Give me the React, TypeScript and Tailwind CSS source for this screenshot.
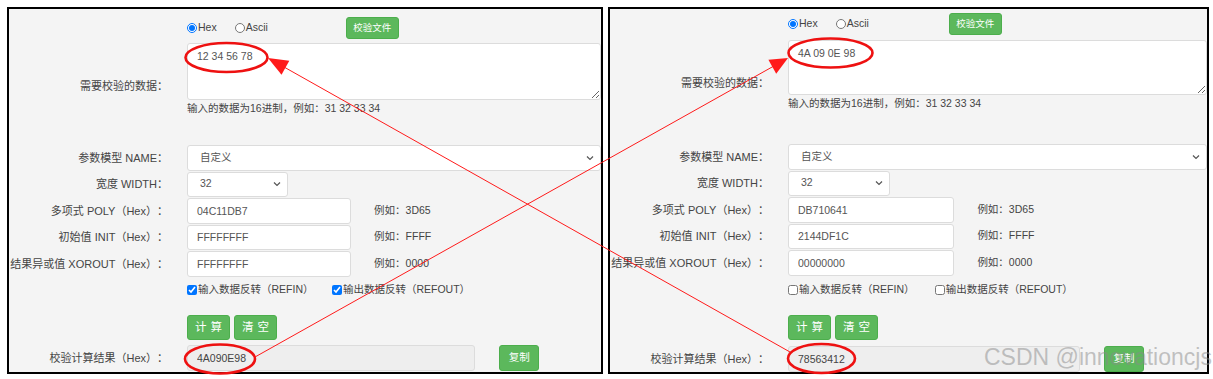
import clsx from "clsx";

type PanelData = {
  name: string;
  input: string;
  poly: string;
  init: string;
  xorout: string;
  refin: boolean;
  refout: boolean;
  result: string;
};

const left: PanelData = {
  name: "a",
  input: "12 34 56 78",
  poly: "04C11DB7",
  init: "FFFFFFFF",
  xorout: "FFFFFFFF",
  refin: true,
  refout: true,
  result: "4A090E98",
};

const right: PanelData = {
  name: "b",
  input: "4A 09 0E 98",
  poly: "DB710641",
  init: "2144DF1C",
  xorout: "00000000",
  refin: false,
  refout: false,
  result: "78563412",
};

function Chevron() {
  return (
    <svg width="8" height="5" viewBox="0 0 8 5" className="absolute right-[7px] top-1/2 -translate-y-1/2">
      <path d="M1 1 L4 4 L7 1" fill="none" stroke="#555" strokeWidth="1.2" />
    </svg>
  );
}

function Row({ label, children }: { label: string; children: React.ReactNode }) {
  return (
    <div className="flex items-center h-[25.5px]">
      <div className="w-[159px] shrink-0 text-right whitespace-nowrap text-[11px]">{label}</div>
      <div className="ml-[19px] flex-1 flex items-center h-full">{children}</div>
    </div>
  );
}

const inputCls =
  "h-full bg-white border border-[#dcdcdc] rounded-[3px] px-[9px] text-[10.5px] text-[#555] outline-none";

function Panel({ d, wide }: { d: PanelData; wide?: boolean }) {
  return (
    <div
      className={clsx(
        "border-2 border-black bg-[#f4f4f4] h-[367px] flex flex-col text-[10.5px] text-[#444]",
        wide ? "w-[601px] pt-[4px]" : "w-[596px] pt-[8px]"
      )}
    >
      <div className="flex items-center h-[22px] pl-[178px]">
        <label className="flex items-center">
          <input type="radio" name={d.name} defaultChecked className="w-[10px] h-[10px] m-0" />
          <span className="ml-[1px]">Hex</span>
        </label>
        <label className="flex items-center ml-[18px]">
          <input type="radio" name={d.name} className="w-[10px] h-[10px] m-0" />
          <span className="ml-[1px]">Ascii</span>
        </label>
        <button
          className={clsx(
            "h-[22px] w-[53px] bg-[#5cb85c] border border-[#4cae4c] rounded-[3px] text-white text-[9.5px]",
            wide ? "ml-[80px]" : "ml-[78px]"
          )}
        >
          校验文件
        </button>
      </div>

      <div className={clsx("flex items-start", wide ? "mt-[5px]" : "mt-[4px]")}>
        <div className="w-[159px] shrink-0 text-right pt-[36px] leading-[14px] text-[11px]">需要校验的数据：</div>
        <div className="ml-[19px] flex-1 flex flex-col">
          <textarea
            defaultValue={d.input}
            className={clsx(
              "w-full bg-white border border-[#dcdcdc] rounded-[3px] px-[9px] pt-[5px] text-[10.5px] text-[#555] outline-none leading-[14px]",
              wide ? "h-[55px]" : "h-[57px]"
            )}
          />
          <div className="leading-[14px] mt-[1px] whitespace-nowrap">输入的数据为16进制，例如：31 32 33 34</div>
        </div>
      </div>

      <div className={clsx("flex flex-col gap-[1px]", wide ? "mt-[34px]" : "mt-[30px]")}>
        <Row label="参数模型 NAME：">
          <div className="relative w-full h-full">
            <div className={clsx(inputCls, "w-full flex items-center pl-[12px]")}>自定义</div>
            <Chevron />
          </div>
        </Row>
        <Row label="宽度 WIDTH：">
          <div className="relative w-[24.4%] h-full">
            <div className={clsx(inputCls, "w-full flex items-center pl-[12px]")}>32</div>
            <Chevron />
          </div>
        </Row>
        <Row label="多项式 POLY（Hex）：">
          <input readOnly value={d.poly} className={clsx(inputCls, "w-[39.6%]")} />
          <span className="ml-[5.6%] whitespace-nowrap">例如：3D65</span>
        </Row>
        <Row label="初始值 INIT（Hex）：">
          <input readOnly value={d.init} className={clsx(inputCls, "w-[39.6%]")} />
          <span className="ml-[5.6%] whitespace-nowrap">例如：FFFF</span>
        </Row>
        <Row label="结果异或值 XOROUT（Hex）：">
          <input readOnly value={d.xorout} className={clsx(inputCls, "w-[39.6%]")} />
          <span className="ml-[5.6%] whitespace-nowrap">例如：0000</span>
        </Row>
      </div>

      <div className={clsx("flex items-center h-[14px] pl-[178px]", wide ? "mt-[7.5px]" : "mt-[6.5px]")}>
        <label className="flex items-center w-[35%] whitespace-nowrap">
          <input type="checkbox" defaultChecked={d.refin} className="w-[10px] h-[10px] m-0" />
          <span className="ml-[1px]">输入数据反转（REFIN）</span>
        </label>
        <label className="flex items-center whitespace-nowrap">
          <input type="checkbox" defaultChecked={d.refout} className="w-[10px] h-[10px] m-0" />
          <span className="ml-[1px]">输出数据反转（REFOUT）</span>
        </label>
      </div>

      <div className="flex items-center gap-[4px] h-[25px] mt-[18px] pl-[178px]">
        <button className="h-full w-[43px] bg-[#5cb85c] border border-[#4cae4c] rounded-[3px] text-white text-[11.5px] tracking-[4px] pl-[4px]">
          计算
        </button>
        <button className="h-full w-[43px] bg-[#5cb85c] border border-[#4cae4c] rounded-[3px] text-white text-[11.5px] tracking-[4px] pl-[4px]">
          清空
        </button>
      </div>

      <div className={clsx(wide ? "mt-[6px]" : "mt-[5px]")}>
        <Row label="校验计算结果（Hex）：">
          <input
            readOnly
            value={d.result}
            className="h-full w-[69.6%] bg-[#eeeeee] border border-[#dcdcdc] rounded-[3px] px-[9px] text-[10.5px] text-[#444] outline-none"
          />
          <button className="ml-[5.8%] h-full w-[40px] bg-[#5cb85c] border border-[#4cae4c] rounded-[3px] text-white text-[10.5px]">
            复制
          </button>
        </Row>
      </div>
    </div>
  );
}

function Annotations() {
  return (
    <svg width="1213" height="379" className="absolute inset-0 pointer-events-none">
      <g fill="none" stroke="#ee1111" strokeWidth="2.6">
        <ellipse cx="226.5" cy="57.5" rx="41" ry="14.5" />
        <ellipse cx="220" cy="359" rx="35" ry="14.5" />
        <ellipse cx="830.5" cy="53" rx="42" ry="14.5" />
        <ellipse cx="821.5" cy="358.5" rx="33.5" ry="14.5" />
      </g>
      <g stroke="#ff1a1a" strokeWidth="1">
        <line x1="790" y1="352" x2="284" y2="67" />
        <line x1="255" y1="357" x2="773" y2="66.5" />
      </g>
      <g fill="#ff1a1a">
        <polygon points="268,58 289.3,60.8 281.5,74.8" />
        <polygon points="788,58 776.2,73.8 768.4,59.8" />
      </g>
    </svg>
  );
}

export default function App() {
  return (
    <div className="relative w-[1213px] h-[379px] bg-white overflow-hidden [text-spacing-trim:space-all] font-['Liberation_Sans','Noto_Sans_CJK_SC',sans-serif]">
      <div className="flex gap-[5px] pt-[7px] pl-[7px]">
        <Panel d={left} />
        <Panel d={right} wide />
      </div>
      <Annotations />
      <div className="absolute left-[984px] top-[343px] text-[23px] leading-[28px] text-[#8a8a8a]/50 whitespace-nowrap font-['Liberation_Sans',sans-serif]">
        CSDN @innovationcjs
      </div>
    </div>
  );
}
